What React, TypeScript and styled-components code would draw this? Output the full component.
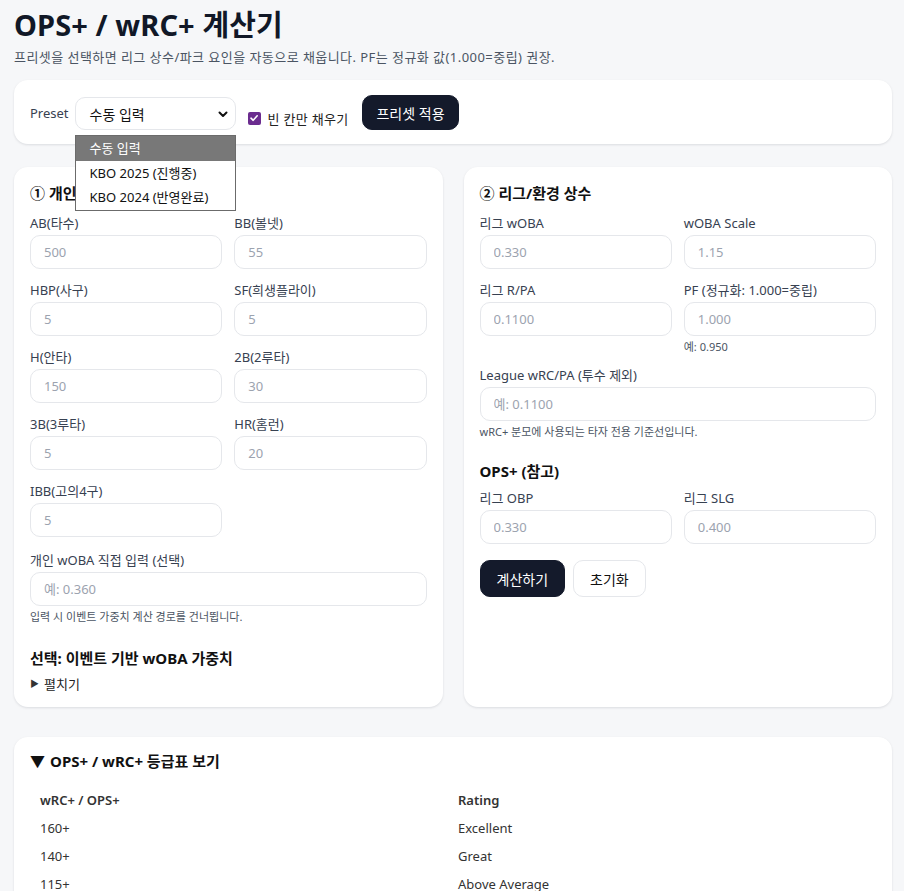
import React from "react";
import styled, { createGlobalStyle } from "styled-components";

const Global = createGlobalStyle`
  html, body { margin: 0; padding: 0; background: #f6f7f9; }
  body {
    font-family: "Noto Sans", "Noto Sans CJK KR", sans-serif;
    color: #111827;
  }
  * { box-sizing: border-box; }
`;

const Page = styled.div`
  padding: 0 12px 0 14px;
`;

const Title = styled.h1`
  margin: 0;
  padding-top: 6px;
  font-size: 29px;
  line-height: 38px;
  font-weight: 700;
  color: #111827;
  letter-spacing: 0.1px;
`;

const Subtitle = styled.p`
  margin: 4px 0 0;
  font-size: 13px;
  line-height: 18px;
  color: #4b5563;
  letter-spacing: 0.45px;
`;

const Card = styled.section<{ $mt?: number; $pb?: number }>`
  background: #fff;
  border-radius: 14px;
  box-shadow: 0 1px 3px rgba(15, 23, 42, 0.08), 0 1px 2px rgba(15, 23, 42, 0.04);
  padding: 16px 16px ${(p) => p.$pb ?? 16}px;
  margin-top: ${(p) => p.$mt ?? 0}px;
`;

const PresetRow = styled.div`
  display: flex;
  align-items: flex-end;
  gap: 12px;
  margin-top: -1px;
  margin-bottom: -2px;
`;

const PresetLabel = styled.span`
  font-size: 13px;
  color: #374151;
  align-self: center;
  margin-right: -6px;
`;

const SelectWrap = styled.div`
  position: relative;
`;

const FakeSelect = styled.div`
  width: 161px;
  height: 33px;
  border: 1px solid #e5e7eb;
  border-radius: 10px;
  background: #fff;
  display: flex;
  align-items: center;
  justify-content: space-between;
  padding: 0 6px 0 14px;
  font-size: 14px;
  color: #111;
`;

const DropList = styled.ul`
  position: absolute;
  left: 0;
  top: 38px;
  width: 161px;
  margin: 0;
  padding: 0 0 1px;
  list-style: none;
  background: #fff;
  border: 1px solid #6b6b6b;
  z-index: 10;
`;

const DropItem = styled.li<{ $active?: boolean }>`
  height: 24px;
  line-height: 24px;
  padding-left: 14px;
  font-size: 13px;
  background: ${(p) => (p.$active ? "#787878" : "#fff")};
  color: ${(p) => (p.$active ? "#fff" : "#111")};
  &:first-child { height: 25px; line-height: 25px; }
`;

const CheckLabel = styled.label`
  display: flex;
  align-items: center;
  gap: 7px;
  font-size: 13px;
  color: #222;
  height: 20px;
  margin-bottom: 2px;
  margin-right: 2px;
  letter-spacing: 0.3px;
`;

const CheckBox = styled.span`
  width: 13px;
  height: 13px;
  border-radius: 2px;
  background: #6b2c8f;
  display: inline-flex;
  align-items: center;
  justify-content: center;
`;

const Button = styled.button<{ $variant?: "dark" | "light"; $h?: number; $px?: number }>`
  height: ${(p) => p.$h ?? 35}px;
  padding: 0 ${(p) => p.$px ?? 13}px;
  border-radius: 10px;
  font-family: inherit;
  font-size: 14px;
  cursor: pointer;
  border: 1px solid ${(p) => (p.$variant === "light" ? "#e5e7eb" : "#141a2b")};
  background: ${(p) => (p.$variant === "light" ? "#fff" : "#141a2b")};
  color: ${(p) => (p.$variant === "light" ? "#111" : "#fff")};
`;

const Columns = styled.div`
  display: grid;
  grid-template-columns: 1fr 1fr;
  gap: 21px;
  margin-top: 23px;
`;

const SectionTitle = styled.h3<{ $mt?: number }>`
  margin: ${(p) => p.$mt ?? 0}px 0 0;
  font-size: 15px;
  line-height: 20px;
  font-weight: 700;
  color: #111;
`;

const FieldGrid = styled.div<{ $mt?: number }>`
  display: grid;
  grid-template-columns: 1fr 1fr;
  column-gap: 12px;
  row-gap: 13px;
  margin-top: ${(p) => p.$mt ?? 12}px;
`;

const Field = styled.div<{ $full?: boolean }>`
  display: flex;
  flex-direction: column;
  grid-column: ${(p) => (p.$full ? "1 / -1" : "auto")};
`;

const Label = styled.label`
  font-size: 13px;
  line-height: 16px;
  color: #374151;
  margin-bottom: 4px;
`;

const Input = styled.input`
  height: 34px;
  width: 100%;
  border: 1px solid #e5e7eb;
  border-radius: 10px;
  padding: 0 13px;
  font-family: inherit;
  font-size: 13px;
  color: #111;
  background: #fff;
  outline: none;
  &::placeholder { color: #9ca3af; }
`;

const Help = styled.div<{ $mt?: number }>`
  font-size: 11px;
  line-height: 14px;
  color: #4b5563;
  margin-top: ${(p) => p.$mt ?? 4}px;
`;

const Summary = styled.div`
  margin-top: 7px;
  font-size: 13px;
  line-height: 18px;
  color: #222;
  display: flex;
  align-items: center;
  gap: 5px;
`;

const Tri = styled.span`
  font-size: 9px;
  color: #333;
`;

const ButtonRow = styled.div`
  display: flex;
  gap: 8px;
  margin-top: 16px;
`;

const TableTitle = styled.div`
  margin-top: -2px;
  font-size: 15px;
  line-height: 20px;
  font-weight: 700;
  color: #111;
  display: flex;
  align-items: center;
  gap: 5px;
`;

const Table = styled.table`
  margin-top: 15px;
  width: 100%;
  border-collapse: collapse;
  font-size: 13px;
  color: #333;
`;

const Th = styled.th<{ $w?: number }>`
  text-align: left;
  font-weight: 600;
  padding: 0 10px;
  height: 28px;
  width: ${(p) => (p.$w ? `${p.$w}px` : "auto")};
`;

const Td = styled.td`
  padding: 0 10px;
  height: 28px;
`;

const Chevron = () => (
  <svg width="12" height="12" viewBox="0 0 12 12">
    <path d="M2.5 4.5 L6 8 L9.5 4.5" stroke="#111" strokeWidth="2" fill="none" strokeLinecap="round" strokeLinejoin="round" />
  </svg>
);

const Check = () => (
  <svg width="10" height="10" viewBox="0 0 10 10">
    <path d="M2 5.2 L4.2 7.3 L8.2 2.8" stroke="#fff" strokeWidth="1.6" fill="none" strokeLinecap="round" strokeLinejoin="round" />
  </svg>
);

type F = { label: string; ph: string; full?: boolean };

const batting: F[] = [
  { label: "AB(타수)", ph: "500" },
  { label: "BB(볼넷)", ph: "55" },
  { label: "HBP(사구)", ph: "5" },
  { label: "SF(희생플라이)", ph: "5" },
  { label: "H(안타)", ph: "150" },
  { label: "2B(2루타)", ph: "30" },
  { label: "3B(3루타)", ph: "5" },
  { label: "HR(홈런)", ph: "20" },
  { label: "IBB(고의4구)", ph: "5" },
];

const ratings = [
  ["160+", "Excellent"],
  ["140+", "Great"],
  ["115+", "Above Average"],
  ["100", "Average"],
  ["80", "Below Average"],
];

const Fields = ({ items }: { items: F[] }) => (
  <>
    {items.map((f) => (
      <Field key={f.label} $full={f.full}>
        <Label>{f.label}</Label>
        <Input placeholder={f.ph} />
      </Field>
    ))}
  </>
);

export default function App() {
  return (
    <Page>
      <Global />
      <Title>OPS+ / wRC+ 계산기</Title>
      <Subtitle>프리셋을 선택하면 리그 상수/파크 요인을 자동으로 채웁니다. PF는 정규화 값(1.000=중립) 권장.</Subtitle>

      <Card $mt={14}>
        <PresetRow>
          <PresetLabel>Preset</PresetLabel>
          <SelectWrap>
            <FakeSelect>
              <span>수동 입력</span>
              <Chevron />
            </FakeSelect>
            <DropList>
              <DropItem $active>수동 입력</DropItem>
              <DropItem>KBO 2025 (진행중)</DropItem>
              <DropItem>KBO 2024 (반영완료)</DropItem>
            </DropList>
          </SelectWrap>
          <CheckLabel>
            <CheckBox>
              <Check />
            </CheckBox>
            빈 칸만 채우기
          </CheckLabel>
          <Button>프리셋 적용</Button>
        </PresetRow>
      </Card>

      <Columns>
        <Card $pb={14}>
          <SectionTitle>① 개인 기록</SectionTitle>
          <FieldGrid>
            <Fields items={batting} />
          </FieldGrid>
          <FieldGrid $mt={15}>
            <Field $full>
              <Label>개인 wOBA 직접 입력 (선택)</Label>
              <Input placeholder="예: 0.360" />
              <Help>입력 시 이벤트 가중치 계산 경로를 건너뜁니다.</Help>
            </Field>
          </FieldGrid>
          <SectionTitle $mt={24}>선택: 이벤트 기반 wOBA 가중치</SectionTitle>
          <Summary>
            <Tri>▶</Tri>펼치기
          </Summary>
        </Card>

        <Card>
          <SectionTitle>② 리그/환경 상수</SectionTitle>
          <FieldGrid>
            <Field>
              <Label>리그 wOBA</Label>
              <Input placeholder="0.330" />
            </Field>
            <Field>
              <Label>wOBA Scale</Label>
              <Input placeholder="1.15" />
            </Field>
            <Field>
              <Label>리그 R/PA</Label>
              <Input placeholder="0.1100" />
            </Field>
            <Field>
              <Label>PF (정규화: 1.000=중립)</Label>
              <Input placeholder="1.000" />
              <Help>예: 0.950</Help>
            </Field>
            <Field $full>
              <Label>League wRC/PA (투수 제외)</Label>
              <Input placeholder="예: 0.1100" />
              <Help>wRC+ 분모에 사용되는 타자 전용 기준선입니다.</Help>
            </Field>
          </FieldGrid>
          <SectionTitle $mt={22}>OPS+ (참고)</SectionTitle>
          <FieldGrid $mt={9}>
            <Field>
              <Label>리그 OBP</Label>
              <Input placeholder="0.330" />
            </Field>
            <Field>
              <Label>리그 SLG</Label>
              <Input placeholder="0.400" />
            </Field>
          </FieldGrid>
          <ButtonRow>
            <Button $h={37} $px={16}>계산하기</Button>
            <Button $h={37} $px={16} $variant="light">초기화</Button>
          </ButtonRow>
        </Card>
      </Columns>

      <Card $mt={30}>
        <TableTitle>
          <span>▼</span> OPS+ / wRC+ 등급표 보기
        </TableTitle>
        <Table>
          <thead>
            <tr>
              <Th $w={418}>wRC+ / OPS+</Th>
              <Th>Rating</Th>
            </tr>
          </thead>
          <tbody>
            {ratings.map(([a, b]) => (
              <tr key={a}>
                <Td>{a}</Td>
                <Td>{b}</Td>
              </tr>
            ))}
          </tbody>
        </Table>
      </Card>
    </Page>
  );
}
